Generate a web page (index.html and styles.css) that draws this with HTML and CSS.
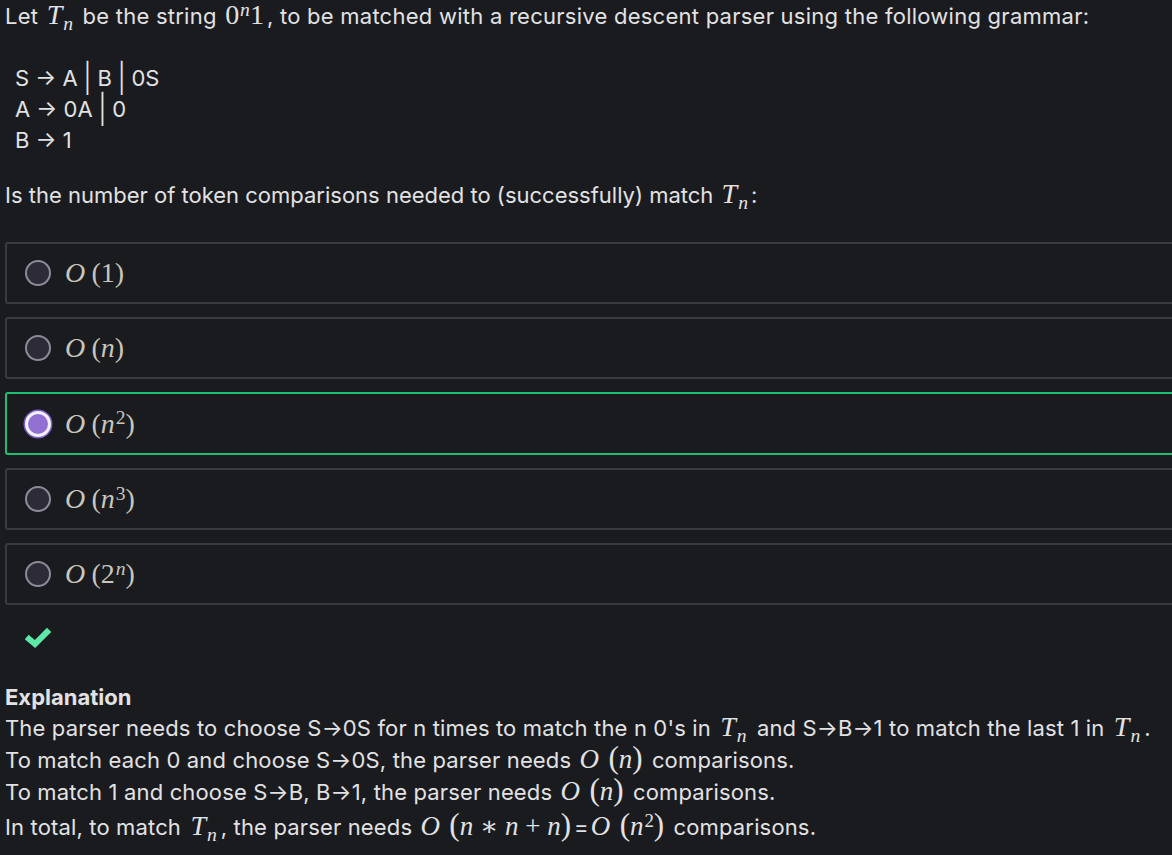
FILE: index.html
```html
<!DOCTYPE html>
<html>
<head>
<meta charset="utf-8">
<link rel="stylesheet" href="styles.css">
</head>
<body>
<div class="page">
  <p class="intro">Let <span class="m"><span class="mi">T</span><sub class="mi">n</sub></span> be the string <span class="m"><span class="mn">0</span><sup class="mi">n</sup><span class="mn">1</span></span>, to be matched with a recursive descent parser using the following grammar:</p>
  <div class="grammar">
    <div>S → A <span class="bar">|</span> B <span class="bar">|</span> 0S</div>
    <div>A → 0A <span class="bar">|</span> 0</div>
    <div>B → 1</div>
  </div>
  <p class="question">Is the number of token comparisons needed to (successfully) match <span class="m"><span class="mi">T</span><sub class="mi">n</sub></span>:</p>
  <div class="options">
    <div class="opt"><span class="radio"></span><span class="om"><span class="mi">O</span><span class="mn lp">(</span><span class="mn">1)</span></span></div>
    <div class="opt"><span class="radio"></span><span class="om"><span class="mi">O</span><span class="mn lp">(</span><span class="mi">n</span><span class="mn">)</span></span></div>
    <div class="opt sel"><span class="radio"></span><span class="om"><span class="mi">O</span><span class="mn lp">(</span><span class="mi">n</span><sup class="mn">2</sup><span class="mn">)</span></span></div>
    <div class="opt"><span class="radio"></span><span class="om"><span class="mi">O</span><span class="mn lp">(</span><span class="mi">n</span><sup class="mn">3</sup><span class="mn">)</span></span></div>
    <div class="opt"><span class="radio"></span><span class="om"><span class="mi">O</span><span class="mn lp">(</span><span class="mn">2</span><sup class="mi">n</sup><span class="mn">)</span></span></div>
  </div>
  <div class="check">
    <svg width="28" height="22" viewBox="0 0 28 22"><polyline points="4,12 10,17 22,5" fill="none" stroke="#5ee8a8" stroke-width="6" stroke-linecap="square" stroke-linejoin="miter"/></svg>
  </div>
  <div class="expl">
    <div class="title">Explanation</div>
    <div class="line">The parser needs to choose S→0S for n times to match the n 0's in <span class="em"><span class="mi">T</span><sub class="mi">n</sub></span> and S→B→1 to match the last 1 in <span class="em"><span class="mi">T</span><sub class="mi">n</sub></span>.</div>
    <div class="line l2">To match each 0 and choose S→0S, the parser needs <span class="em big"><span class="mi">O</span><span class="mn lp p">(</span><span class="mi">n</span><span class="mn p">)</span></span> comparisons.</div>
    <div class="line l3">To match 1 and choose S→B, B→1, the parser needs <span class="em big"><span class="mi">O</span><span class="mn lp p">(</span><span class="mi">n</span><span class="mn p">)</span></span> comparisons.</div>
    <div class="line l4">In total, to match <span class="em"><span class="mi">T</span><sub class="mi">n</sub></span>, the parser needs <span class="em big"><span class="mi">O</span><span class="mn lp p">(</span><span class="mi">n</span><span class="mn op">∗</span><span class="mi">n</span><span class="mn op">+</span><span class="mi">n</span><span class="mn p">)</span></span>=<span class="em big"><span class="mi">O</span><span class="mn lp p">(</span><span class="mi">n</span><sup class="mn">2</sup><span class="mn p">)</span></span> comparisons.</div>
  </div>
</div>
</body>
</html>
```
FILE: styles.css
```css
html, body {
  margin: 0;
  padding: 0;
  background: #1a1b1e;
  overflow: hidden;
}
body {
  font-family: Inter, "Noto Sans", sans-serif;
  color: #e2e2e4;
  font-size: 22px;
}
.page {
  padding: 2px 0 0 5px;
}
p { margin: 0; }
.intro {
  line-height: 28px;
  letter-spacing: 0.25px;
}
.m, .em, .om {
  font-family: "Liberation Serif", "DejaVu Serif", serif;
  letter-spacing: 0;
}
.m, .em { line-height: 0; }
.m { font-size: 28px; margin: 0 3px 0 2px; }
.mi { font-style: italic; }
.mn { font-style: normal; }
.lp { margin-left: 0.22em; }
.op { margin: 0 0.25em; }
sub, sup { font-size: 70%; line-height: 0; position: relative; }
sub { vertical-align: baseline; top: 0.3em; margin-left: 1px; }
sup { vertical-align: baseline; top: -0.42em; margin-left: 0.05em; }
.grammar {
  margin-top: 33px;
  padding-left: 10px;
  line-height: 31px;
}
.bar {
  display: inline-block;
  transform: scaleY(1.3);
}
.question {
  margin-top: 25px;
  line-height: 28px;
}
.options {
  margin-top: 33px;
  margin-right: -40px;
  display: flex;
  flex-direction: column;
  gap: 13px;
}
.opt {
  height: 58px;
  border: 2px solid #3a3b3e;
  border-radius: 3px;
  display: flex;
  align-items: center;
  gap: 14px;
  padding-left: 18px;
}
.opt.sel {
  border-color: #1fbf72;
  height: 59px;
}
.radio {
  width: 22px;
  height: 22px;
  border-radius: 50%;
  border: 2px solid #8d8b99;
  background: #2c2b37;
  flex: none;
}
.sel .radio {
  width: 20px;
  height: 20px;
  border: 3px solid #f4f1fb;
  background: #9170d2;
  box-shadow: 0 0 0 1.5px #7b5dc6;
}
.om {
  font-size: 28px;
  color: #c9c6bc;
}
.check {
  height: 77px;
  padding-left: 20px;
  padding-top: 22px;
  box-sizing: border-box;
}
.title {
  font-weight: 700;
  line-height: 30px;
}
.line {
  line-height: 33px;
  letter-spacing: 0.15px;
}
.l2 { line-height: 31px; }
.l3 { line-height: 33px; }
.l4 { line-height: 36px; }
.em { font-size: 28px; margin: 0 4px 0 3px; }
.em.big { font-size: 27px; margin: 0 3px 0 2px; }
.em .p { font-size: 1.15em; line-height: 0; }
.em .lp { margin-left: 0.3em; }
```
